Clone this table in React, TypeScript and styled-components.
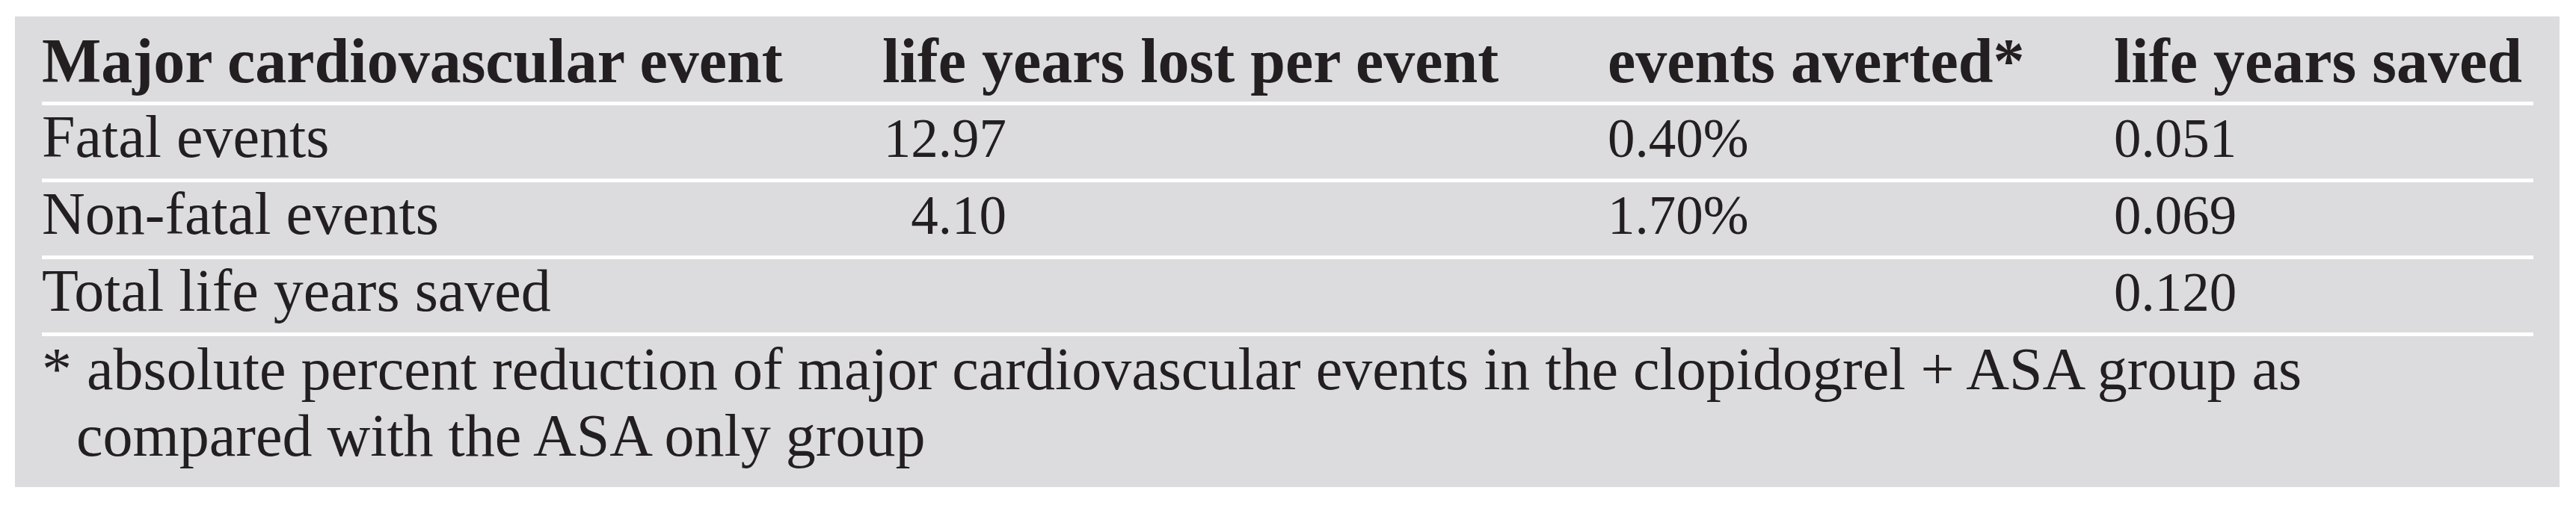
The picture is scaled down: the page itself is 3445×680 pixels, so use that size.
import React from 'react';
import styled, { createGlobalStyle } from 'styled-components';

const serif = `'Liberation Serif', 'Times New Roman', 'DejaVu Serif', serif`;

const GlobalStyle = createGlobalStyle`
  body {
    margin: 0;
    background: #ffffff;
    color: #231f20;
    font-family: ${serif};
  }
`;

const Page = styled.div`
  padding: 22px 0 0 20px;
`;

const TableBox = styled.section`
  width: 3403px;
  height: 630px;
  box-sizing: border-box;
  background: #dcdcde;
  padding: 0 35px 0 36px;
  font-family: ${serif};
`;

const Row = styled.div<{ $head?: boolean }>`
  display: grid;
  grid-template-columns: 1124px 970px 677px 1fr;
  border-top: ${(p) => (p.$head ? 'none' : '5px solid #ffffff')};
  padding: ${(p) => (p.$head ? '18px 0 12px' : '0 0 11px')};
  font-family: ${serif};
  font-size: ${(p) => (p.$head ? '84px' : '80px')};
  font-weight: ${(p) => (p.$head ? 700 : 400)};
  line-height: 84px;
  white-space: nowrap;
`;

const Cell = styled.div``;

const Num = styled.span<{ $width?: number }>`
  display: inline-block;
  font-size: 73px;
  width: ${(p) => (p.$width ? `${p.$width}px` : 'auto')};
  text-align: ${(p) => (p.$width ? 'right' : 'left')};
`;

const Footnote = styled.p`
  margin: 0;
  border-top: 5px solid #ffffff;
  font-family: ${serif};
  font-size: 80px;
  line-height: 89px;
  padding-left: 46px;
  text-indent: -46px;
  white-space: nowrap;
`;

type Line = {
  label: string;
  lost?: string;
  averted?: string;
  saved: string;
};

const lines: Line[] = [
  { label: 'Fatal events', lost: '12.97', averted: '0.40%', saved: '0.051' },
  { label: 'Non-fatal events', lost: '4.10', averted: '1.70%', saved: '0.069' },
  { label: 'Total life years saved', saved: '0.120' },
];

export default function App() {
  return (
    <Page>
      <GlobalStyle />
      <TableBox>
        <Row $head>
          <Cell>Major cardiovascular event</Cell>
          <Cell>life years lost per event</Cell>
          <Cell>events averted*</Cell>
          <Cell>life years saved</Cell>
        </Row>
        {lines.map((l) => (
          <Row key={l.label}>
            <Cell>{l.label}</Cell>
            <Cell>{l.lost && <Num $width={166}>{l.lost}</Num>}</Cell>
            <Cell>{l.averted && <Num>{l.averted}</Num>}</Cell>
            <Cell>
              <Num>{l.saved}</Num>
            </Cell>
          </Row>
        ))}
        <Footnote>
          * absolute percent reduction of major cardiovascular events in the clopidogrel + ASA group as
          <br />
          compared with the ASA only group
        </Footnote>
      </TableBox>
    </Page>
  );
}
